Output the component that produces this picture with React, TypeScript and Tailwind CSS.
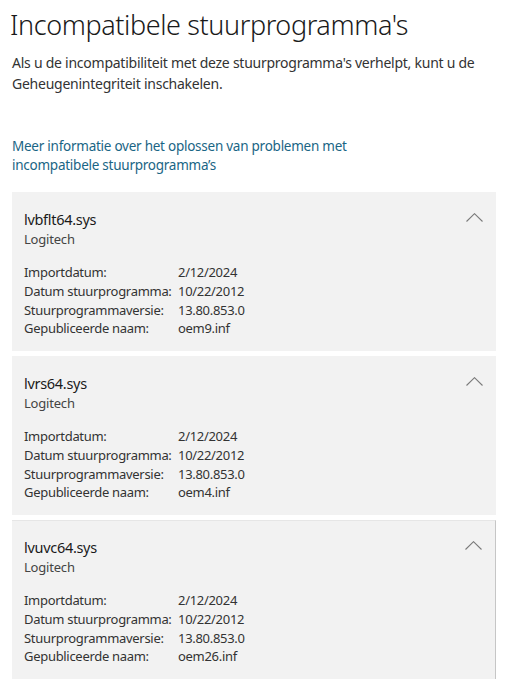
const drivers = [
  { name: "lvbflt64.sys", vendor: "Logitech", inf: "oem9.inf", hovered: false },
  { name: "lvrs64.sys", vendor: "Logitech", inf: "oem4.inf", hovered: false },
  { name: "lvuvc64.sys", vendor: "Logitech", inf: "oem26.inf", hovered: true },
];

const ChevronUp = () => (
  <svg width="17" height="9" viewBox="0 0 17 9" fill="none" className="mt-[4px]">
    <path d="M0.5 8.5L8.5 0.7L16.5 8.5" stroke="#7a7a7a" strokeWidth="1.1" />
  </svg>
);

const DriverCard = ({ d }: { d: (typeof drivers)[number] }) => {
  const rows = [
    ["Importdatum:", "2/12/2024"],
    ["Datum stuurprogramma:", "10/22/2012"],
    ["Stuurprogrammaversie:", "13.80.853.0"],
    ["Gepubliceerde naam:", d.inf],
  ];
  return (
    <div
      className={
        d.hovered
          ? "bg-[#f2f2f2] h-[159px] pl-3 pr-[13px] pt-[16px] border-t border-r border-t-[#e6e6e6] border-r-[#c6c6c6]"
          : "bg-[#f2f2f2] h-[159px] pl-3 pr-[13px] pt-[17px]"
      }
    >
      <div className="flex justify-between">
        <div>
          <div className="text-[14.5px] leading-[20px] text-[#1a1a1a] tracking-[-0.3px]">{d.name}</div>
          <div className="text-[13px] leading-[20px] text-[#444] tracking-[-0.2px]">{d.vendor}</div>
        </div>
        <ChevronUp />
      </div>
      <div className="mt-[14px] grid grid-cols-[154px_1fr] text-[13px] leading-[18.8px] text-[#333] tracking-[-0.3px]">
        {rows.map(([k, v]) => (
          <div key={k} className="contents">
            <div className="whitespace-nowrap">{k}</div>
            <div>{v}</div>
          </div>
        ))}
      </div>
    </div>
  );
};

export default function App() {
  return (
    <div className="w-[508px] h-[688px] bg-white overflow-hidden font-['Noto_Sans',sans-serif]">
      <h1 className="pl-[10px] pt-[7px] text-[27px] leading-[36px] font-light text-[#1a1a1a] tracking-[-0.4px]">
        Incompatibele stuurprogramma's
      </h1>
      <p className="px-3 mt-[10px] text-[14px] leading-[20.5px] text-[#333] tracking-[-0.25px]">
        Als u de incompatibiliteit met deze stuurprogramma's verhelpt, kunt u de Geheugenintegriteit inschakelen.
      </p>
      <a className="block px-3 mt-[43px] w-[380px] text-[13.5px] leading-[19px] text-[#1a6585] tracking-[-0.25px]">
        Meer informatie over het oplossen van problemen met incompatibele stuurprogramma’s
      </a>
      <div className="mt-[17px] mx-3 flex flex-col gap-[5px]">
        {drivers.map((d) => (
          <DriverCard key={d.name} d={d} />
        ))}
      </div>
    </div>
  );
}
